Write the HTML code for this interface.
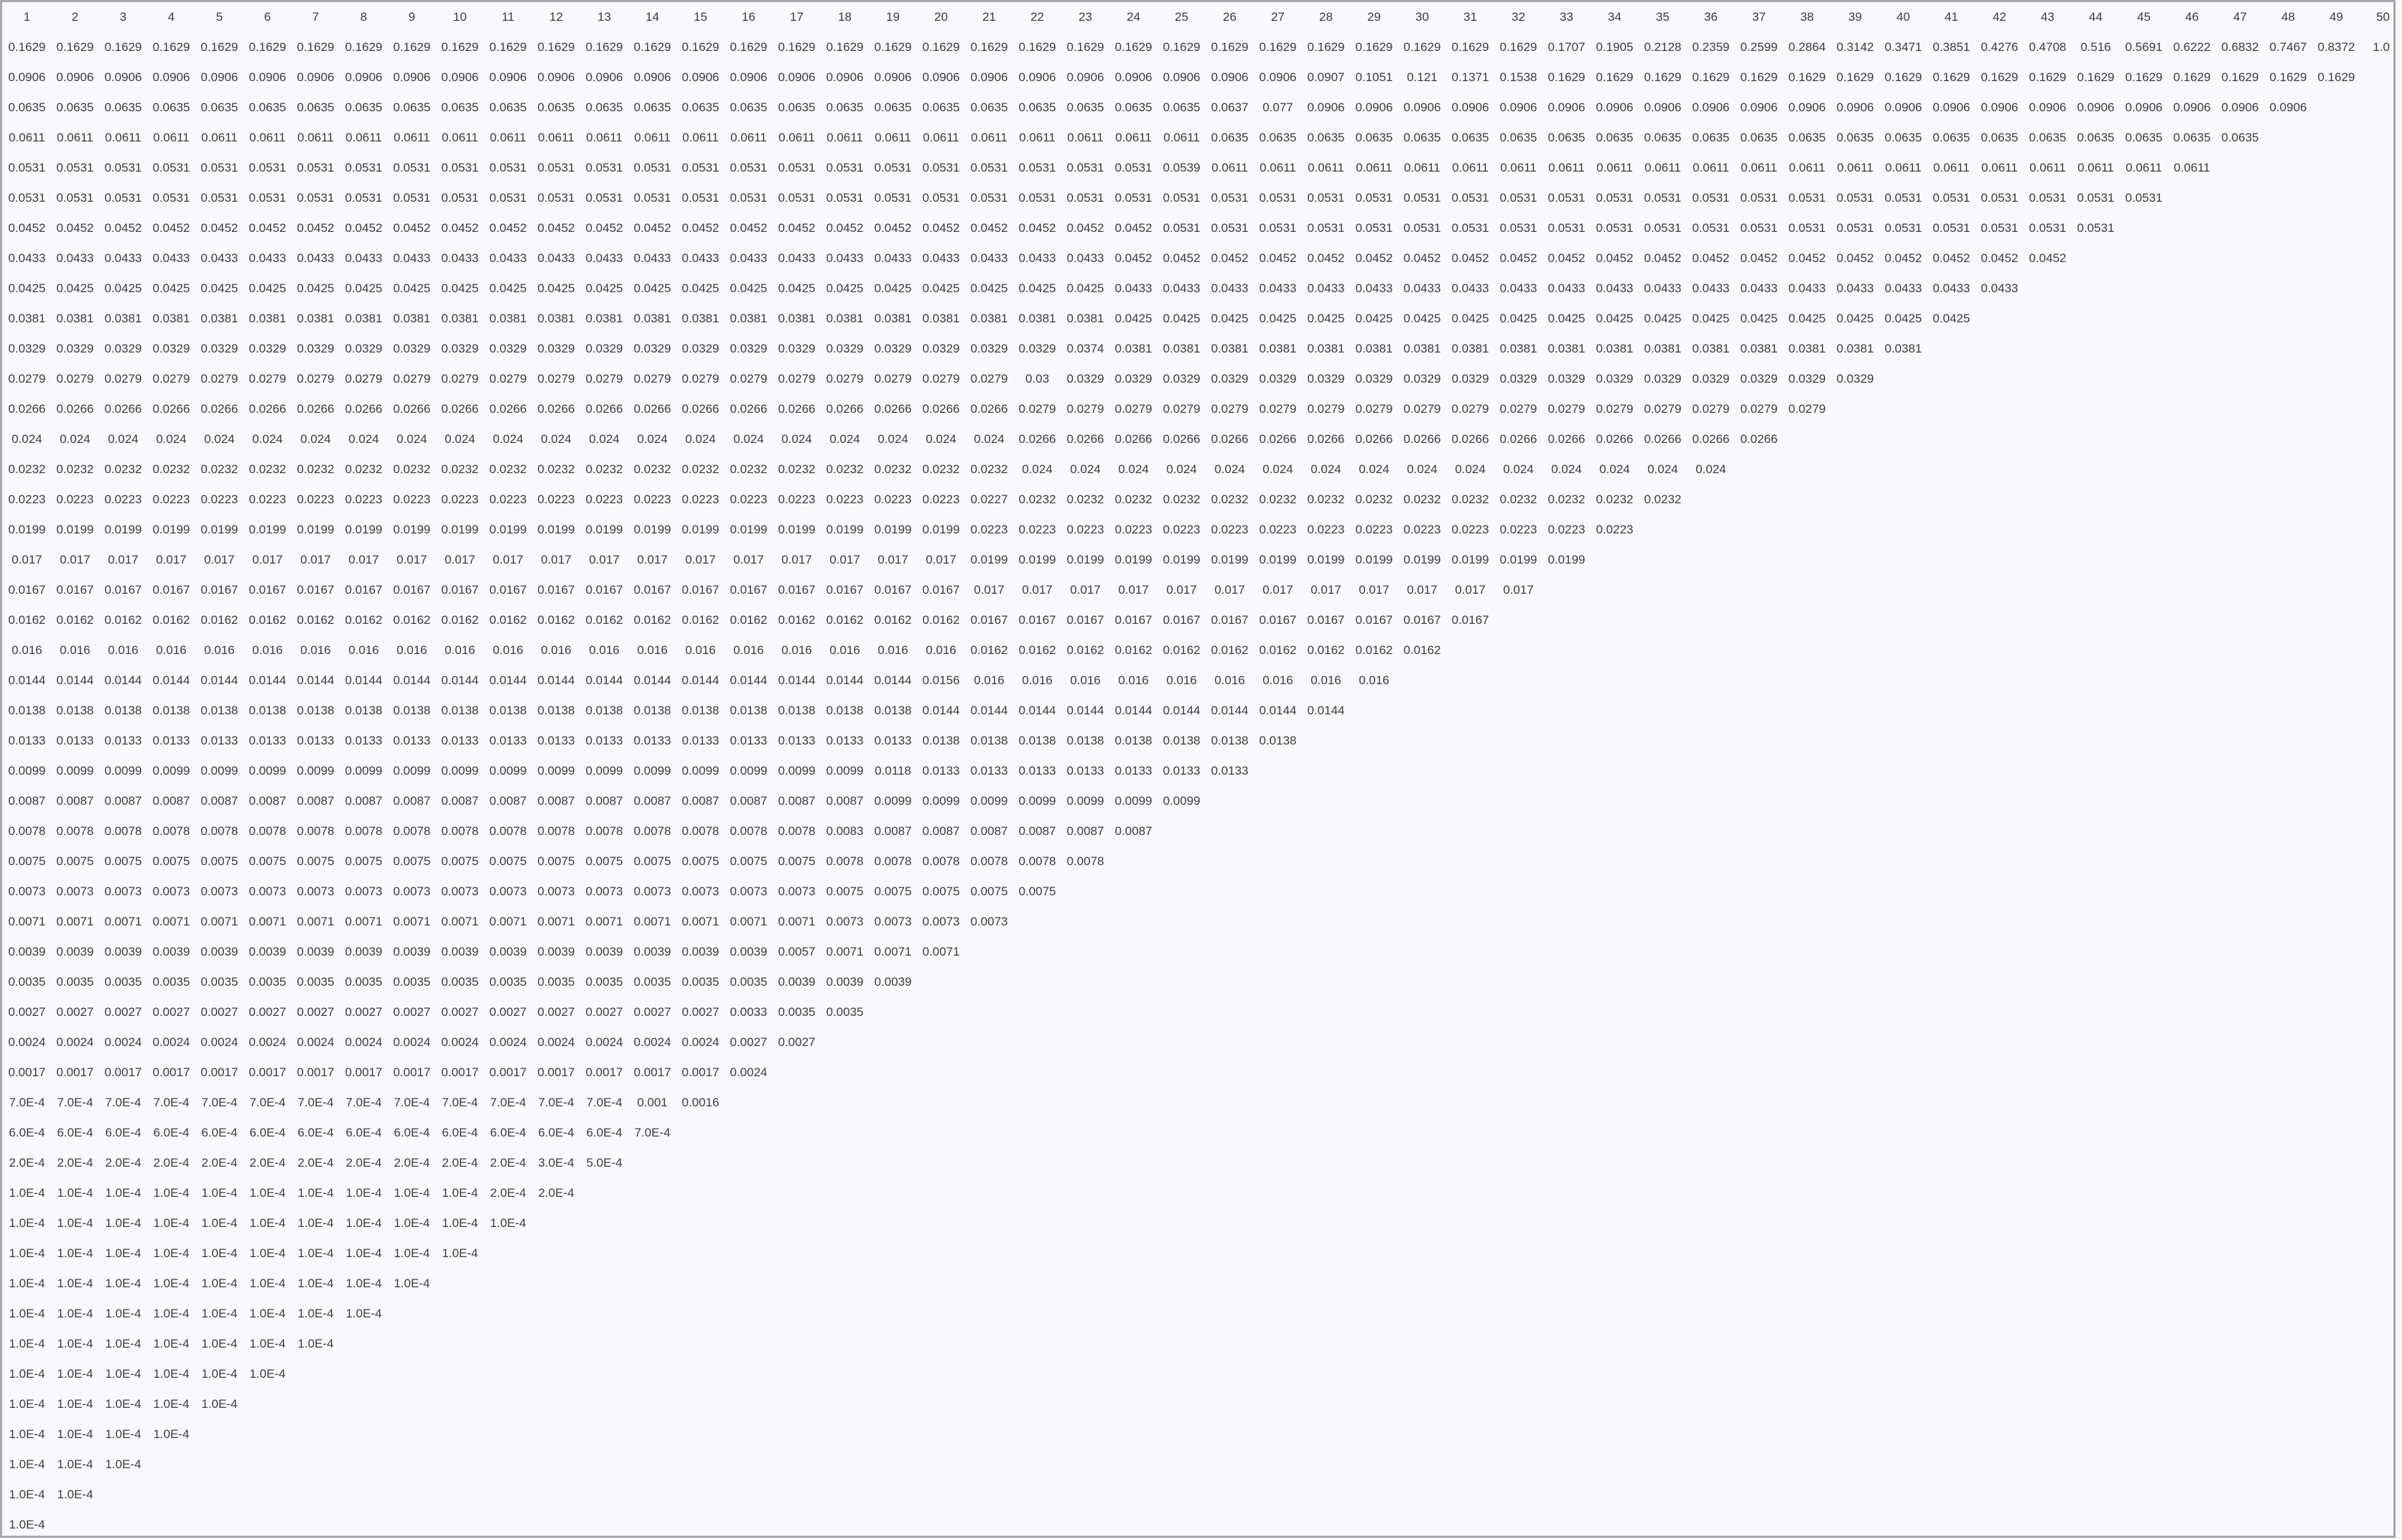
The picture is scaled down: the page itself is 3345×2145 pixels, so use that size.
<!DOCTYPE html>
<html><head><meta charset="utf-8"><style>
html,body{margin:0;padding:0;background:#f8f8fd;}
body{width:3345px;height:2142px;overflow:hidden;position:relative;}
.box{position:absolute;left:0;top:0;width:3330px;height:2136px;border:3px solid #a9a9ab;background:#f8f8fd;}
table{position:absolute;left:1px;top:0;border-collapse:collapse;table-layout:fixed;}
td{width:67px;min-width:67px;max-width:67px;height:42px;padding:0;text-align:center;font-family:"Liberation Sans",sans-serif;font-size:17px;color:#3c3c3c;white-space:nowrap;overflow:visible;}
td.l{text-align:right;padding-right:26px;width:41px;min-width:41px;max-width:41px;}
</style></head><body><div class="box"><table>
<tr><td>1<td>2<td>3<td>4<td>5<td>6<td>7<td>8<td>9<td>10<td>11<td>12<td>13<td>14<td>15<td>16<td>17<td>18<td>19<td>20<td>21<td>22<td>23<td>24<td>25<td>26<td>27<td>28<td>29<td>30<td>31<td>32<td>33<td>34<td>35<td>36<td>37<td>38<td>39<td>40<td>41<td>42<td>43<td>44<td>45<td>46<td>47<td>48<td>49<td class="l">50
<tr><td>0.1629<td>0.1629<td>0.1629<td>0.1629<td>0.1629<td>0.1629<td>0.1629<td>0.1629<td>0.1629<td>0.1629<td>0.1629<td>0.1629<td>0.1629<td>0.1629<td>0.1629<td>0.1629<td>0.1629<td>0.1629<td>0.1629<td>0.1629<td>0.1629<td>0.1629<td>0.1629<td>0.1629<td>0.1629<td>0.1629<td>0.1629<td>0.1629<td>0.1629<td>0.1629<td>0.1629<td>0.1629<td>0.1707<td>0.1905<td>0.2128<td>0.2359<td>0.2599<td>0.2864<td>0.3142<td>0.3471<td>0.3851<td>0.4276<td>0.4708<td>0.516<td>0.5691<td>0.6222<td>0.6832<td>0.7467<td>0.8372<td class="l">1.0
<tr><td>0.0906<td>0.0906<td>0.0906<td>0.0906<td>0.0906<td>0.0906<td>0.0906<td>0.0906<td>0.0906<td>0.0906<td>0.0906<td>0.0906<td>0.0906<td>0.0906<td>0.0906<td>0.0906<td>0.0906<td>0.0906<td>0.0906<td>0.0906<td>0.0906<td>0.0906<td>0.0906<td>0.0906<td>0.0906<td>0.0906<td>0.0906<td>0.0907<td>0.1051<td>0.121<td>0.1371<td>0.1538<td>0.1629<td>0.1629<td>0.1629<td>0.1629<td>0.1629<td>0.1629<td>0.1629<td>0.1629<td>0.1629<td>0.1629<td>0.1629<td>0.1629<td>0.1629<td>0.1629<td>0.1629<td>0.1629<td>0.1629
<tr><td>0.0635<td>0.0635<td>0.0635<td>0.0635<td>0.0635<td>0.0635<td>0.0635<td>0.0635<td>0.0635<td>0.0635<td>0.0635<td>0.0635<td>0.0635<td>0.0635<td>0.0635<td>0.0635<td>0.0635<td>0.0635<td>0.0635<td>0.0635<td>0.0635<td>0.0635<td>0.0635<td>0.0635<td>0.0635<td>0.0637<td>0.077<td>0.0906<td>0.0906<td>0.0906<td>0.0906<td>0.0906<td>0.0906<td>0.0906<td>0.0906<td>0.0906<td>0.0906<td>0.0906<td>0.0906<td>0.0906<td>0.0906<td>0.0906<td>0.0906<td>0.0906<td>0.0906<td>0.0906<td>0.0906<td>0.0906
<tr><td>0.0611<td>0.0611<td>0.0611<td>0.0611<td>0.0611<td>0.0611<td>0.0611<td>0.0611<td>0.0611<td>0.0611<td>0.0611<td>0.0611<td>0.0611<td>0.0611<td>0.0611<td>0.0611<td>0.0611<td>0.0611<td>0.0611<td>0.0611<td>0.0611<td>0.0611<td>0.0611<td>0.0611<td>0.0611<td>0.0635<td>0.0635<td>0.0635<td>0.0635<td>0.0635<td>0.0635<td>0.0635<td>0.0635<td>0.0635<td>0.0635<td>0.0635<td>0.0635<td>0.0635<td>0.0635<td>0.0635<td>0.0635<td>0.0635<td>0.0635<td>0.0635<td>0.0635<td>0.0635<td>0.0635
<tr><td>0.0531<td>0.0531<td>0.0531<td>0.0531<td>0.0531<td>0.0531<td>0.0531<td>0.0531<td>0.0531<td>0.0531<td>0.0531<td>0.0531<td>0.0531<td>0.0531<td>0.0531<td>0.0531<td>0.0531<td>0.0531<td>0.0531<td>0.0531<td>0.0531<td>0.0531<td>0.0531<td>0.0531<td>0.0539<td>0.0611<td>0.0611<td>0.0611<td>0.0611<td>0.0611<td>0.0611<td>0.0611<td>0.0611<td>0.0611<td>0.0611<td>0.0611<td>0.0611<td>0.0611<td>0.0611<td>0.0611<td>0.0611<td>0.0611<td>0.0611<td>0.0611<td>0.0611<td>0.0611
<tr><td>0.0531<td>0.0531<td>0.0531<td>0.0531<td>0.0531<td>0.0531<td>0.0531<td>0.0531<td>0.0531<td>0.0531<td>0.0531<td>0.0531<td>0.0531<td>0.0531<td>0.0531<td>0.0531<td>0.0531<td>0.0531<td>0.0531<td>0.0531<td>0.0531<td>0.0531<td>0.0531<td>0.0531<td>0.0531<td>0.0531<td>0.0531<td>0.0531<td>0.0531<td>0.0531<td>0.0531<td>0.0531<td>0.0531<td>0.0531<td>0.0531<td>0.0531<td>0.0531<td>0.0531<td>0.0531<td>0.0531<td>0.0531<td>0.0531<td>0.0531<td>0.0531<td>0.0531
<tr><td>0.0452<td>0.0452<td>0.0452<td>0.0452<td>0.0452<td>0.0452<td>0.0452<td>0.0452<td>0.0452<td>0.0452<td>0.0452<td>0.0452<td>0.0452<td>0.0452<td>0.0452<td>0.0452<td>0.0452<td>0.0452<td>0.0452<td>0.0452<td>0.0452<td>0.0452<td>0.0452<td>0.0452<td>0.0531<td>0.0531<td>0.0531<td>0.0531<td>0.0531<td>0.0531<td>0.0531<td>0.0531<td>0.0531<td>0.0531<td>0.0531<td>0.0531<td>0.0531<td>0.0531<td>0.0531<td>0.0531<td>0.0531<td>0.0531<td>0.0531<td>0.0531
<tr><td>0.0433<td>0.0433<td>0.0433<td>0.0433<td>0.0433<td>0.0433<td>0.0433<td>0.0433<td>0.0433<td>0.0433<td>0.0433<td>0.0433<td>0.0433<td>0.0433<td>0.0433<td>0.0433<td>0.0433<td>0.0433<td>0.0433<td>0.0433<td>0.0433<td>0.0433<td>0.0433<td>0.0452<td>0.0452<td>0.0452<td>0.0452<td>0.0452<td>0.0452<td>0.0452<td>0.0452<td>0.0452<td>0.0452<td>0.0452<td>0.0452<td>0.0452<td>0.0452<td>0.0452<td>0.0452<td>0.0452<td>0.0452<td>0.0452<td>0.0452
<tr><td>0.0425<td>0.0425<td>0.0425<td>0.0425<td>0.0425<td>0.0425<td>0.0425<td>0.0425<td>0.0425<td>0.0425<td>0.0425<td>0.0425<td>0.0425<td>0.0425<td>0.0425<td>0.0425<td>0.0425<td>0.0425<td>0.0425<td>0.0425<td>0.0425<td>0.0425<td>0.0425<td>0.0433<td>0.0433<td>0.0433<td>0.0433<td>0.0433<td>0.0433<td>0.0433<td>0.0433<td>0.0433<td>0.0433<td>0.0433<td>0.0433<td>0.0433<td>0.0433<td>0.0433<td>0.0433<td>0.0433<td>0.0433<td>0.0433
<tr><td>0.0381<td>0.0381<td>0.0381<td>0.0381<td>0.0381<td>0.0381<td>0.0381<td>0.0381<td>0.0381<td>0.0381<td>0.0381<td>0.0381<td>0.0381<td>0.0381<td>0.0381<td>0.0381<td>0.0381<td>0.0381<td>0.0381<td>0.0381<td>0.0381<td>0.0381<td>0.0381<td>0.0425<td>0.0425<td>0.0425<td>0.0425<td>0.0425<td>0.0425<td>0.0425<td>0.0425<td>0.0425<td>0.0425<td>0.0425<td>0.0425<td>0.0425<td>0.0425<td>0.0425<td>0.0425<td>0.0425<td>0.0425
<tr><td>0.0329<td>0.0329<td>0.0329<td>0.0329<td>0.0329<td>0.0329<td>0.0329<td>0.0329<td>0.0329<td>0.0329<td>0.0329<td>0.0329<td>0.0329<td>0.0329<td>0.0329<td>0.0329<td>0.0329<td>0.0329<td>0.0329<td>0.0329<td>0.0329<td>0.0329<td>0.0374<td>0.0381<td>0.0381<td>0.0381<td>0.0381<td>0.0381<td>0.0381<td>0.0381<td>0.0381<td>0.0381<td>0.0381<td>0.0381<td>0.0381<td>0.0381<td>0.0381<td>0.0381<td>0.0381<td>0.0381
<tr><td>0.0279<td>0.0279<td>0.0279<td>0.0279<td>0.0279<td>0.0279<td>0.0279<td>0.0279<td>0.0279<td>0.0279<td>0.0279<td>0.0279<td>0.0279<td>0.0279<td>0.0279<td>0.0279<td>0.0279<td>0.0279<td>0.0279<td>0.0279<td>0.0279<td>0.03<td>0.0329<td>0.0329<td>0.0329<td>0.0329<td>0.0329<td>0.0329<td>0.0329<td>0.0329<td>0.0329<td>0.0329<td>0.0329<td>0.0329<td>0.0329<td>0.0329<td>0.0329<td>0.0329<td>0.0329
<tr><td>0.0266<td>0.0266<td>0.0266<td>0.0266<td>0.0266<td>0.0266<td>0.0266<td>0.0266<td>0.0266<td>0.0266<td>0.0266<td>0.0266<td>0.0266<td>0.0266<td>0.0266<td>0.0266<td>0.0266<td>0.0266<td>0.0266<td>0.0266<td>0.0266<td>0.0279<td>0.0279<td>0.0279<td>0.0279<td>0.0279<td>0.0279<td>0.0279<td>0.0279<td>0.0279<td>0.0279<td>0.0279<td>0.0279<td>0.0279<td>0.0279<td>0.0279<td>0.0279<td>0.0279
<tr><td>0.024<td>0.024<td>0.024<td>0.024<td>0.024<td>0.024<td>0.024<td>0.024<td>0.024<td>0.024<td>0.024<td>0.024<td>0.024<td>0.024<td>0.024<td>0.024<td>0.024<td>0.024<td>0.024<td>0.024<td>0.024<td>0.0266<td>0.0266<td>0.0266<td>0.0266<td>0.0266<td>0.0266<td>0.0266<td>0.0266<td>0.0266<td>0.0266<td>0.0266<td>0.0266<td>0.0266<td>0.0266<td>0.0266<td>0.0266
<tr><td>0.0232<td>0.0232<td>0.0232<td>0.0232<td>0.0232<td>0.0232<td>0.0232<td>0.0232<td>0.0232<td>0.0232<td>0.0232<td>0.0232<td>0.0232<td>0.0232<td>0.0232<td>0.0232<td>0.0232<td>0.0232<td>0.0232<td>0.0232<td>0.0232<td>0.024<td>0.024<td>0.024<td>0.024<td>0.024<td>0.024<td>0.024<td>0.024<td>0.024<td>0.024<td>0.024<td>0.024<td>0.024<td>0.024<td>0.024
<tr><td>0.0223<td>0.0223<td>0.0223<td>0.0223<td>0.0223<td>0.0223<td>0.0223<td>0.0223<td>0.0223<td>0.0223<td>0.0223<td>0.0223<td>0.0223<td>0.0223<td>0.0223<td>0.0223<td>0.0223<td>0.0223<td>0.0223<td>0.0223<td>0.0227<td>0.0232<td>0.0232<td>0.0232<td>0.0232<td>0.0232<td>0.0232<td>0.0232<td>0.0232<td>0.0232<td>0.0232<td>0.0232<td>0.0232<td>0.0232<td>0.0232
<tr><td>0.0199<td>0.0199<td>0.0199<td>0.0199<td>0.0199<td>0.0199<td>0.0199<td>0.0199<td>0.0199<td>0.0199<td>0.0199<td>0.0199<td>0.0199<td>0.0199<td>0.0199<td>0.0199<td>0.0199<td>0.0199<td>0.0199<td>0.0199<td>0.0223<td>0.0223<td>0.0223<td>0.0223<td>0.0223<td>0.0223<td>0.0223<td>0.0223<td>0.0223<td>0.0223<td>0.0223<td>0.0223<td>0.0223<td>0.0223
<tr><td>0.017<td>0.017<td>0.017<td>0.017<td>0.017<td>0.017<td>0.017<td>0.017<td>0.017<td>0.017<td>0.017<td>0.017<td>0.017<td>0.017<td>0.017<td>0.017<td>0.017<td>0.017<td>0.017<td>0.017<td>0.0199<td>0.0199<td>0.0199<td>0.0199<td>0.0199<td>0.0199<td>0.0199<td>0.0199<td>0.0199<td>0.0199<td>0.0199<td>0.0199<td>0.0199
<tr><td>0.0167<td>0.0167<td>0.0167<td>0.0167<td>0.0167<td>0.0167<td>0.0167<td>0.0167<td>0.0167<td>0.0167<td>0.0167<td>0.0167<td>0.0167<td>0.0167<td>0.0167<td>0.0167<td>0.0167<td>0.0167<td>0.0167<td>0.0167<td>0.017<td>0.017<td>0.017<td>0.017<td>0.017<td>0.017<td>0.017<td>0.017<td>0.017<td>0.017<td>0.017<td>0.017
<tr><td>0.0162<td>0.0162<td>0.0162<td>0.0162<td>0.0162<td>0.0162<td>0.0162<td>0.0162<td>0.0162<td>0.0162<td>0.0162<td>0.0162<td>0.0162<td>0.0162<td>0.0162<td>0.0162<td>0.0162<td>0.0162<td>0.0162<td>0.0162<td>0.0167<td>0.0167<td>0.0167<td>0.0167<td>0.0167<td>0.0167<td>0.0167<td>0.0167<td>0.0167<td>0.0167<td>0.0167
<tr><td>0.016<td>0.016<td>0.016<td>0.016<td>0.016<td>0.016<td>0.016<td>0.016<td>0.016<td>0.016<td>0.016<td>0.016<td>0.016<td>0.016<td>0.016<td>0.016<td>0.016<td>0.016<td>0.016<td>0.016<td>0.0162<td>0.0162<td>0.0162<td>0.0162<td>0.0162<td>0.0162<td>0.0162<td>0.0162<td>0.0162<td>0.0162
<tr><td>0.0144<td>0.0144<td>0.0144<td>0.0144<td>0.0144<td>0.0144<td>0.0144<td>0.0144<td>0.0144<td>0.0144<td>0.0144<td>0.0144<td>0.0144<td>0.0144<td>0.0144<td>0.0144<td>0.0144<td>0.0144<td>0.0144<td>0.0156<td>0.016<td>0.016<td>0.016<td>0.016<td>0.016<td>0.016<td>0.016<td>0.016<td>0.016
<tr><td>0.0138<td>0.0138<td>0.0138<td>0.0138<td>0.0138<td>0.0138<td>0.0138<td>0.0138<td>0.0138<td>0.0138<td>0.0138<td>0.0138<td>0.0138<td>0.0138<td>0.0138<td>0.0138<td>0.0138<td>0.0138<td>0.0138<td>0.0144<td>0.0144<td>0.0144<td>0.0144<td>0.0144<td>0.0144<td>0.0144<td>0.0144<td>0.0144
<tr><td>0.0133<td>0.0133<td>0.0133<td>0.0133<td>0.0133<td>0.0133<td>0.0133<td>0.0133<td>0.0133<td>0.0133<td>0.0133<td>0.0133<td>0.0133<td>0.0133<td>0.0133<td>0.0133<td>0.0133<td>0.0133<td>0.0133<td>0.0138<td>0.0138<td>0.0138<td>0.0138<td>0.0138<td>0.0138<td>0.0138<td>0.0138
<tr><td>0.0099<td>0.0099<td>0.0099<td>0.0099<td>0.0099<td>0.0099<td>0.0099<td>0.0099<td>0.0099<td>0.0099<td>0.0099<td>0.0099<td>0.0099<td>0.0099<td>0.0099<td>0.0099<td>0.0099<td>0.0099<td>0.0118<td>0.0133<td>0.0133<td>0.0133<td>0.0133<td>0.0133<td>0.0133<td>0.0133
<tr><td>0.0087<td>0.0087<td>0.0087<td>0.0087<td>0.0087<td>0.0087<td>0.0087<td>0.0087<td>0.0087<td>0.0087<td>0.0087<td>0.0087<td>0.0087<td>0.0087<td>0.0087<td>0.0087<td>0.0087<td>0.0087<td>0.0099<td>0.0099<td>0.0099<td>0.0099<td>0.0099<td>0.0099<td>0.0099
<tr><td>0.0078<td>0.0078<td>0.0078<td>0.0078<td>0.0078<td>0.0078<td>0.0078<td>0.0078<td>0.0078<td>0.0078<td>0.0078<td>0.0078<td>0.0078<td>0.0078<td>0.0078<td>0.0078<td>0.0078<td>0.0083<td>0.0087<td>0.0087<td>0.0087<td>0.0087<td>0.0087<td>0.0087
<tr><td>0.0075<td>0.0075<td>0.0075<td>0.0075<td>0.0075<td>0.0075<td>0.0075<td>0.0075<td>0.0075<td>0.0075<td>0.0075<td>0.0075<td>0.0075<td>0.0075<td>0.0075<td>0.0075<td>0.0075<td>0.0078<td>0.0078<td>0.0078<td>0.0078<td>0.0078<td>0.0078
<tr><td>0.0073<td>0.0073<td>0.0073<td>0.0073<td>0.0073<td>0.0073<td>0.0073<td>0.0073<td>0.0073<td>0.0073<td>0.0073<td>0.0073<td>0.0073<td>0.0073<td>0.0073<td>0.0073<td>0.0073<td>0.0075<td>0.0075<td>0.0075<td>0.0075<td>0.0075
<tr><td>0.0071<td>0.0071<td>0.0071<td>0.0071<td>0.0071<td>0.0071<td>0.0071<td>0.0071<td>0.0071<td>0.0071<td>0.0071<td>0.0071<td>0.0071<td>0.0071<td>0.0071<td>0.0071<td>0.0071<td>0.0073<td>0.0073<td>0.0073<td>0.0073
<tr><td>0.0039<td>0.0039<td>0.0039<td>0.0039<td>0.0039<td>0.0039<td>0.0039<td>0.0039<td>0.0039<td>0.0039<td>0.0039<td>0.0039<td>0.0039<td>0.0039<td>0.0039<td>0.0039<td>0.0057<td>0.0071<td>0.0071<td>0.0071
<tr><td>0.0035<td>0.0035<td>0.0035<td>0.0035<td>0.0035<td>0.0035<td>0.0035<td>0.0035<td>0.0035<td>0.0035<td>0.0035<td>0.0035<td>0.0035<td>0.0035<td>0.0035<td>0.0035<td>0.0039<td>0.0039<td>0.0039
<tr><td>0.0027<td>0.0027<td>0.0027<td>0.0027<td>0.0027<td>0.0027<td>0.0027<td>0.0027<td>0.0027<td>0.0027<td>0.0027<td>0.0027<td>0.0027<td>0.0027<td>0.0027<td>0.0033<td>0.0035<td>0.0035
<tr><td>0.0024<td>0.0024<td>0.0024<td>0.0024<td>0.0024<td>0.0024<td>0.0024<td>0.0024<td>0.0024<td>0.0024<td>0.0024<td>0.0024<td>0.0024<td>0.0024<td>0.0024<td>0.0027<td>0.0027
<tr><td>0.0017<td>0.0017<td>0.0017<td>0.0017<td>0.0017<td>0.0017<td>0.0017<td>0.0017<td>0.0017<td>0.0017<td>0.0017<td>0.0017<td>0.0017<td>0.0017<td>0.0017<td>0.0024
<tr><td>7.0E-4<td>7.0E-4<td>7.0E-4<td>7.0E-4<td>7.0E-4<td>7.0E-4<td>7.0E-4<td>7.0E-4<td>7.0E-4<td>7.0E-4<td>7.0E-4<td>7.0E-4<td>7.0E-4<td>0.001<td>0.0016
<tr><td>6.0E-4<td>6.0E-4<td>6.0E-4<td>6.0E-4<td>6.0E-4<td>6.0E-4<td>6.0E-4<td>6.0E-4<td>6.0E-4<td>6.0E-4<td>6.0E-4<td>6.0E-4<td>6.0E-4<td>7.0E-4
<tr><td>2.0E-4<td>2.0E-4<td>2.0E-4<td>2.0E-4<td>2.0E-4<td>2.0E-4<td>2.0E-4<td>2.0E-4<td>2.0E-4<td>2.0E-4<td>2.0E-4<td>3.0E-4<td>5.0E-4
<tr><td>1.0E-4<td>1.0E-4<td>1.0E-4<td>1.0E-4<td>1.0E-4<td>1.0E-4<td>1.0E-4<td>1.0E-4<td>1.0E-4<td>1.0E-4<td>2.0E-4<td>2.0E-4
<tr><td>1.0E-4<td>1.0E-4<td>1.0E-4<td>1.0E-4<td>1.0E-4<td>1.0E-4<td>1.0E-4<td>1.0E-4<td>1.0E-4<td>1.0E-4<td>1.0E-4
<tr><td>1.0E-4<td>1.0E-4<td>1.0E-4<td>1.0E-4<td>1.0E-4<td>1.0E-4<td>1.0E-4<td>1.0E-4<td>1.0E-4<td>1.0E-4
<tr><td>1.0E-4<td>1.0E-4<td>1.0E-4<td>1.0E-4<td>1.0E-4<td>1.0E-4<td>1.0E-4<td>1.0E-4<td>1.0E-4
<tr><td>1.0E-4<td>1.0E-4<td>1.0E-4<td>1.0E-4<td>1.0E-4<td>1.0E-4<td>1.0E-4<td>1.0E-4
<tr><td>1.0E-4<td>1.0E-4<td>1.0E-4<td>1.0E-4<td>1.0E-4<td>1.0E-4<td>1.0E-4
<tr><td>1.0E-4<td>1.0E-4<td>1.0E-4<td>1.0E-4<td>1.0E-4<td>1.0E-4
<tr><td>1.0E-4<td>1.0E-4<td>1.0E-4<td>1.0E-4<td>1.0E-4
<tr><td>1.0E-4<td>1.0E-4<td>1.0E-4<td>1.0E-4
<tr><td>1.0E-4<td>1.0E-4<td>1.0E-4
<tr><td>1.0E-4<td>1.0E-4
<tr><td>1.0E-4
</table></div></body></html>
